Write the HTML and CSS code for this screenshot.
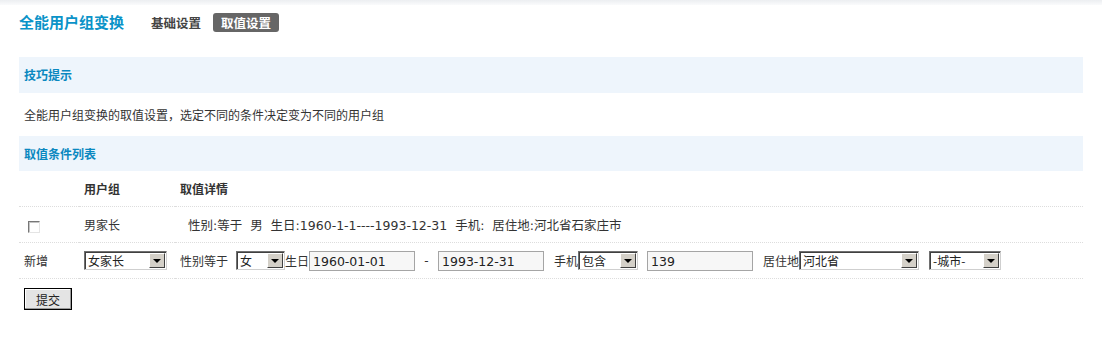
FILE: index.html
```html
<!doctype html>
<html lang="zh-CN">

<head>
    <meta charset="utf-8">
    <title>全能用户组变换</title>
    <link rel="stylesheet" href="styles.css">
</head>

<body>

    <div class="topbar"></div>

    <div class="head">
        <h1 class="title">全能用户组变换</h1>
        <a class="tab">基础设置</a>
        <a class="tab active">取值设置</a>
    </div>

    <div class="main">
        <h3 class="band">技巧提示</h3>
        <p class="tip">全能用户组变换的取值设置，选定不同的条件决定变为不同的用户组</p>

        <h3 class="band">取值条件列表</h3>
        <table class="list">
            <thead>
                <tr>
                    <th class="col-check"></th>
                    <th class="col-group">用户组</th>
                    <th>取值详情</th>
                </tr>
            </thead>
            <tbody>
                <tr>
                    <td class="col-check"><input type="checkbox" class="check"></td>
                    <td class="col-group">男家长</td>
                    <td class="detail">性别:等于&nbsp;&nbsp;男&nbsp;&nbsp;生日:1960-1-1----1993-12-31&nbsp;&nbsp;手机:&nbsp;&nbsp;居住地:河北省石家庄市</td>
                </tr>
                <tr>
                    <td class="col-check">新增</td>
                    <td class="col-group">
                        <span class="sel w83"><select><option>女家长</option></select></span>
                    </td>
                    <td>
                        <div class="form-line">
                            <span class="lbl">性别等于</span>
                            <span class="sel w49 gap8"><select><option>女</option></select></span>
                            <span class="lbl">生日</span>
                            <input type="text" class="field" value="1960-01-01">
                            <span class="dash">-</span>
                            <input type="text" class="field" value="1993-12-31">
                            <span class="lbl gap10">手机</span>
                            <span class="sel w60"><select><option>包含</option></select></span>
                            <input type="text" class="field gap9" value="139">
                            <span class="lbl gap10">居住地</span>
                            <span class="sel w120"><select><option>河北省</option></select></span>
                            <span class="sel w72 gap10"><select><option>-城市-</option></select></span>
                        </div>
                    </td>
                </tr>
            </tbody>
        </table>

        <div class="actions">
            <button class="submit">提交</button>
        </div>
    </div>

</body>

</html>
```

FILE: styles.css
```css
body {
    font-family: "Noto Sans CJK SC", "DejaVu Sans", sans-serif;
    font-size: 12px;
    color: #333;
    margin: 0;
    padding: 0;
    background-color: #fff;
}

.topbar {
    height: 5px;
    background: linear-gradient(#eceef1, #fafbfc);
}

.head {
    display: flex;
    align-items: center;
    height: 20px;
    margin: 7px 0 25px;
    padding: 0 19px;
}

.title {
    margin: 0 27px 0 0;
    font-size: 15px;
    line-height: 20px;
    color: #0b93c8;
}

.tab {
    font-weight: bold;
    font-size: 12.5px;
    color: #444;
    padding: 0 8px;
    height: 19px;
    line-height: 19px;
    margin-left: -8px;
    border-radius: 3px;
}

.tab.active {
    margin-left: 4px;
    background-color: #666;
    color: #fff;
}

.main {
    padding: 0 19px;
}

.band {
    margin: 0;
    height: 36px;
    line-height: 36px;
    padding-left: 5px;
    font-size: 12px;
    color: #0a88c0;
    background-color: #eef5fc;
}

.tip {
    margin: 0;
    height: 43px;
    line-height: 43px;
    padding-left: 5px;
}

.tip + .band {
    height: 35px;
    line-height: 35px;
}

.list {
    width: 100%;
    border-collapse: collapse;
}

.list th,
.list td {
    height: 35px;
    padding: 0 0 0 5px;
    border-bottom: 1px dotted #ddd;
    text-align: left;
    vertical-align: middle;
    white-space: nowrap;
}

.list th {
    font-weight: bold;
}

.list .col-check {
    width: 55px;
}

.list .col-group {
    width: 91px;
}

.list .detail {
    padding-left: 13px;
    font-family: "DejaVu Sans", "Noto Sans CJK SC", sans-serif;
    font-size: 12.5px;
}

.check {
    appearance: none;
    width: 12px;
    height: 12px;
    margin: 0 0 0 4px;
    vertical-align: middle;
    border: 1px solid;
    border-color: #777 #e4e4e4 #e4e4e4 #777;
    box-shadow: inset 1px 1px 0 #c4c4c4;
    background: #fff;
}

.form-line {
    display: flex;
    align-items: center;
}

.lbl {
    line-height: 20px;
}

.sel {
    position: relative;
    display: inline-block;
    height: 19px;
    box-sizing: border-box;
}

.sel select {
    appearance: none;
    width: 100%;
    height: 19px;
    margin: 0;
    padding: 0 0 0 3px;
    border: 1px solid;
    border-color: #707070 #cfcfcf #cfcfcf #707070;
    box-shadow: inset 1px 1px 0 #404040;
    background: #fff;
    font-family: "Noto Sans CJK SC", sans-serif;
    font-size: 12px;
    color: #222;
    border-radius: 0;
}

.sel::before {
    content: "";
    position: absolute;
    top: 2px;
    right: 2px;
    width: 14px;
    height: 13px;
    background: #d4d0c8;
    border: 1px solid;
    border-color: #fff #404040 #404040 #fff;
    pointer-events: none;
}

.sel::after {
    content: "";
    position: absolute;
    top: 8px;
    right: 6px;
    border-left: 4px solid transparent;
    border-right: 4px solid transparent;
    border-top: 4px solid #000;
    pointer-events: none;
}

.field {
    box-sizing: border-box;
    width: 106px;
    height: 20px;
    margin: 0;
    padding: 1px 3px 0;
    border: 1px solid #a5a5a5;
    background: #f7f7f7;
    font-family: "DejaVu Sans", sans-serif;
    font-size: 12.5px;
    color: #222;
}

.w83 { width: 83px; }
.w49 { width: 49px; }
.w60 { width: 60px; }
.w120 { width: 120px; }
.w72 { width: 72px; }

.gap8 { margin-left: 8px; }
.gap9 { margin-left: 9px; }
.gap10 { margin-left: 10px; }

.dash {
    width: 23px;
    text-align: center;
    font-family: "DejaVu Sans", sans-serif;
}

.actions {
    padding: 9px 0 0 5px;
}

.submit {
    width: 48px;
    height: 22px;
    padding: 0;
    border: 1px solid #000;
    background: #e4e4e4;
    box-shadow: inset -1px -1px 0 #999, inset 1px 1px 0 #fff;
    font-family: "Noto Sans CJK SC", sans-serif;
    font-size: 12px;
    color: #222;
}
```
